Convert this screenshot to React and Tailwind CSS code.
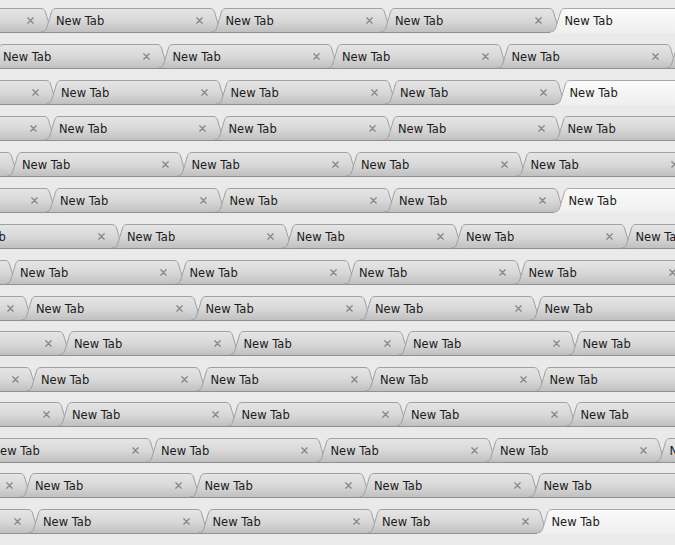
import React, { useId } from 'react';
import clsx from 'clsx';

// each row of the tab wall: height, horizontal shift of the tab strip, which tab is selected
const rows = [
    { h: 'h-[36px]', ml: 'ml-[-114px]', active: 4 },
    { h: 'h-[36px]', ml: 'ml-[2.5px]', active: -1 },
    { h: 'h-[36px]', ml: 'ml-[-109px]', active: 4 },
    { h: 'h-[36px]', ml: 'ml-[-111px]', active: -1 },
    { h: 'h-[36px]', ml: 'ml-[-148px]', active: -1 },
    { h: 'h-[36px]', ml: 'ml-[-110px]', active: 4 },
    { h: 'h-[36px]', ml: 'ml-[-43px]', active: -1 },
    { h: 'h-[36px]', ml: 'ml-[-150px]', active: -1 },
    { h: 'h-[35px]', ml: 'ml-[-134px]', active: -1 },
    { h: 'h-[36px]', ml: 'ml-[-96px]', active: -1 },
    { h: 'h-[35px]', ml: 'ml-[-129px]', active: -1 },
    { h: 'h-[36px]', ml: 'ml-[-98px]', active: -1 },
    { h: 'h-[35px]', ml: 'ml-[-9px]', active: -1 },
    { h: 'h-[36px]', ml: 'ml-[-135px]', active: -1 },
    { h: 'h-[44px]', ml: 'ml-[-127px]', active: 4 },
];

const TAB_PATH =
    'M0,24 C3.5,24 5,22.5 6,19 L10.5,4 C11.5,1.2 12.8,0.5 16,0.5 L168,0.5 C171.2,0.5 172.5,1.2 173.5,4 L178,19 C179,22.5 180.5,24 184,24';

function Tab({ active }) {
    const id = useId();
    return (
        <div
            className={clsx(
                'relative -ml-[14.5px] flex h-[24px] w-[184px] shrink-0 items-center pl-[15px] pr-[22px] pt-[3px]',
                active && 'z-10'
            )}
        >
            <svg className="absolute left-0 top-0 h-[25px] w-[184px]" viewBox="0 0 184 25">
                <defs>
                    <linearGradient id={id} x1="0" y1="0" x2="0" y2="1">
                        {active ? (
                            <>
                                <stop offset="0" stopColor="#fafafa" />
                                <stop offset="1" stopColor="#efefef" />
                            </>
                        ) : (
                            <>
                                <stop offset="0" stopColor="#e6e6e6" />
                                <stop offset="0.55" stopColor="#d7d7d7" />
                                <stop offset="1" stopColor="#c0c0c0" />
                            </>
                        )}
                    </linearGradient>
                </defs>
                <path d={TAB_PATH + (active ? ' L184,25 L0,25 Z' : ' Z')} fill={`url(#${id})`} />
                <path d={TAB_PATH} fill="none" stroke={active ? '#a9a9a9' : '#a0a0a0'} strokeWidth="1" />
            </svg>
            <span className="relative flex-1 text-[11.5px] leading-none text-[#1a1a1a] [font-family:'DejaVu_Sans',sans-serif]">
                New Tab
            </span>
            <svg className="relative -mt-[2px] h-[7px] w-[7px]" viewBox="0 0 7 7">
                <path d="M0.8,0.8 L6.2,6.2 M6.2,0.8 L0.8,6.2" stroke="#858585" strokeWidth="1.25" strokeLinecap="round" />
            </svg>
        </div>
    );
}

export default function App() {
    return (
        <div className="flex h-[545px] w-[675px] flex-col overflow-hidden bg-[#eaeaea]">
            {rows.map((row, i) => (
                <div key={i} className={clsx('flex shrink-0 flex-col overflow-hidden', row.h)}>
                    <div className="h-[8px] shrink-0" />
                    {/* tab strip with the toolbar line under it */}
                    <div className="h-[25px] shrink-0 border-b border-[#909090]">
                        <div className={clsx('flex items-start', row.ml)}>
                            {[0, 1, 2, 3, 4, 5].map((t) => (
                                <Tab key={t} active={t === row.active} />
                            ))}
                        </div>
                    </div>
                </div>
            ))}
        </div>
    );
}
